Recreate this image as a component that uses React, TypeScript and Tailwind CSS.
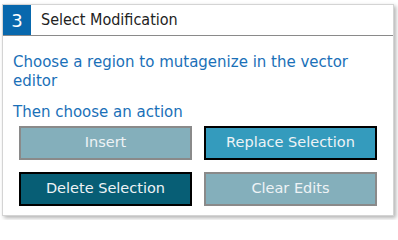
import React from "react";

const FONT = "font-['DejaVu_Sans',Verdana,sans-serif]";

const ACTIONS = [
    { label: "Insert", cls: "bg-[#84afbb] border-[#8a8a8a]" },
    { label: "Replace Selection", cls: "bg-[#349bbd] border-black" },
    { label: "Delete Selection", cls: "bg-[#075e75] border-black" },
    { label: "Clear Edits", cls: "bg-[#84afbb] border-[#8a8a8a]" },
];

export default function App() {
    return (
        <div className={`w-[398px] h-[220px] bg-white pt-[4px] pl-[2px] ${FONT}`}>
            <div className="w-[392px] h-[212px] bg-white border border-[#d4d4d4] shadow-[2px_2px_4px_rgba(0,0,0,0.3)]">
                {/* Step header */}
                <div className="flex h-[31px] border-b border-[#8a8a8a]">
                    <div className="w-[28px] bg-[#0868ad] text-white text-[18px] flex items-center justify-center">
                        3
                    </div>
                    <div className="pl-[10px] flex items-center text-[16px] text-[#222] font-['DejaVu_Sans_Condensed','DejaVu_Sans',sans-serif]">
                        Select Modification
                    </div>
                </div>

                {/* Body */}
                <div className="pt-[17px] px-[10px] text-[15px] leading-[19px] text-[#1a70b8]">
                    <p>Choose a region to mutagenize in the vector editor</p>
                    <p className="mt-[12px]">Then choose an action</p>
                </div>

                <div className="grid grid-cols-[173px_173px] gap-x-[12px] gap-y-[12px] pl-[16px] pt-[4px]">
                    {ACTIONS.map((a) => (
                        <button
                            key={a.label}
                            className={`h-[34px] border-2 text-[14.5px] text-[#eef3f6] ${a.cls}`}
                        >
                            {a.label}
                        </button>
                    ))}
                </div>
            </div>
        </div>
    );
}
